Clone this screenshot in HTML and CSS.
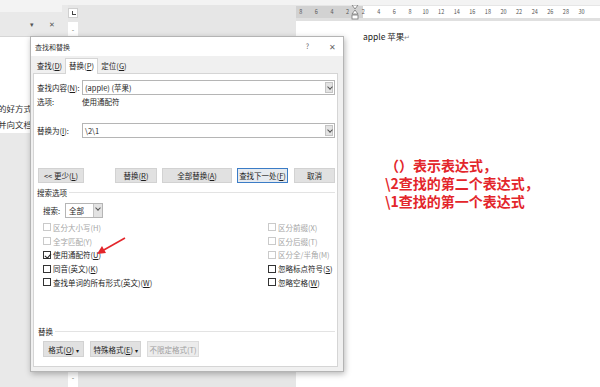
FILE: index.html
```html
<!DOCTYPE html>
<html lang="zh-CN">
<head>
  <meta charset="UTF-8" />
  <meta name="viewport" content="width=device-width, initial-scale=1.0" />
  <title>查找和替换</title>
  <link rel="stylesheet" href="styles.css">
</head>
<body>
  <div class="ribbon-edge"></div>
  <div class="workspace">
    <aside class="nav-pane">
      <div class="nav-top"></div>
      <div class="nav-head">
        <span class="nav-drop">▾</span>
        <span class="nav-close">✕</span>
      </div>
      <div class="nav-results">
        <p class="first">的好方式。</p>
        <p>并向文档中</p>
      </div>
    </aside>
    <div class="splitter"></div>
    <div class="vruler">
      <div class="tab-stop"><i></i></div>
      <div class="vruler-strip">
        <span class="mark top">-</span>
        <span class="mark bottom">-</span>
      </div>
    </div>
    <div class="gutter"></div>
    <main class="page">
      <div class="hruler">
        <div class="ruler-nums">
          <span>8</span><span>6</span><span>4</span><span>2</span>
          <span class="indent">
            <svg width="8" height="16" viewBox="0 0 8 16">
              <polygon points="1,0 7,0 4,4" fill="#fff" stroke="#777" stroke-width="0.8" />
              <polygon points="4,5 7,9 1,9" fill="#fff" stroke="#777" stroke-width="0.8" />
              <rect x="1" y="10" width="6" height="4" fill="#fff" stroke="#777" stroke-width="0.8" />
            </svg>
          </span>
          <span>2</span><span>4</span><span>6</span><span>8</span><span>10</span><span>12</span>
          <span>14</span><span>16</span><span>18</span><span>20</span><span>22</span><span>24</span>
          <span>26</span><span>28</span><span>30</span>
        </div>
      </div>
      <div class="sheet">
        <p>apple 苹果<span class="para">↵</span></p>
      </div>
    </main>
  </div>

  <div class="dialog">
    <div class="dlg-title">
      <span>查找和替换</span>
      <span class="dlg-ctrls"><span class="help">?</span><span class="close">✕</span></span>
    </div>
    <div class="tabs">
      <span class="tab">查找(<u>D</u>)</span>
      <span class="tab active">替换(<u>P</u>)</span>
      <span class="tab">定位(<u>G</u>)</span>
    </div>
    <div class="panel">
      <div class="field-row find">
        <label>查找内容(<u>N</u>):</label>
        <div class="combo"><span>(apple) (苹果)</span><i class="drop"></i></div>
      </div>
      <div class="field-row opts">
        <span class="lbl">选项:</span>
        <span>使用通配符</span>
      </div>
      <div class="field-row repl">
        <label>替换为(<u>I</u>):</label>
        <div class="combo"><span>\2\1</span><i class="drop"></i></div>
      </div>

      <div class="btn-row">
        <button class="btn less">&lt;&lt; 更少(<u>L</u>)</button>
        <button class="btn replace">替换(<u>R</u>)</button>
        <button class="btn all">全部替换(<u>A</u>)</button>
        <button class="btn next focus">查找下一处(<u>F</u>)</button>
        <button class="btn cancel">取消</button>
      </div>

      <div class="group-title"><span>搜索选项</span></div>
      <div class="search-row">
        <span>搜索:</span>
        <div class="select"><span>全部</span><i class="drop"></i></div>
      </div>

      <div class="checks">
        <label class="check off"><i class="box"></i><span>区分大小写(H)</span></label>
        <label class="check off"><i class="box"></i><span>区分前缀(X)</span></label>
        <label class="check off"><i class="box"></i><span>全字匹配(Y)</span></label>
        <label class="check off"><i class="box"></i><span>区分后缀(T)</span></label>
        <label class="check on"><i class="box"></i><span>使用通配符(<u>U</u>)</span></label>
        <label class="check off"><i class="box"></i><span>区分全/半角(M)</span></label>
        <label class="check"><i class="box"></i><span>同音(英文)(<u>K</u>)</span></label>
        <label class="check"><i class="box"></i><span>忽略标点符号(<u>S</u>)</span></label>
        <label class="check"><i class="box"></i><span>查找单词的所有形式(英文)(<u>W</u>)</span></label>
        <label class="check"><i class="box"></i><span>忽略空格(<u>W</u>)</span></label>
      </div>

      <div class="group-title replace-title"><span>替换</span></div>
      <div class="btn-row bottom">
        <button class="btn fmt">格式(<u>O</u>) <b>▾</b></button>
        <button class="btn special">特殊格式(<u>E</u>) <b>▾</b></button>
        <button class="btn nofmt" disabled>不限定格式(T)</button>
      </div>
    </div>
  </div>

  <svg class="arrow" width="40" height="30" viewBox="0 0 40 30">
    <line x1="35" y1="6" x2="12" y2="19" stroke="#e3262b" stroke-width="1.6" />
    <polygon points="7,22 12,14 16,21" fill="#e3262b" />
  </svg>

  <div class="note">
    <p class="first">（）表示表达式，</p>
    <p>\2查找的第二个表达式，</p>
    <p>\1查找的第一个表达式</p>
  </div>
</body>
</html>
```

FILE: styles.css
```css
* {
  box-sizing: border-box;
}
body {
  margin: 0;
  width: 600px;
  height: 387px;
  overflow: hidden;
  position: relative;
  display: flex;
  flex-direction: column;
  background: #e6e6e6;
  font-family: "Noto Sans CJK SC", "Noto Sans", sans-serif;
  color: #222;
}
p {
  margin: 0;
}
.ribbon-edge {
  height: 5px;
  flex: none;
  background: #f3f3f3;
}
.workspace {
  flex: 1;
  display: flex;
}

/* navigation pane */
.nav-pane {
  width: 62px;
  display: flex;
  flex-direction: column;
  background: #e9e9e9;
}
.nav-top {
  height: 7px;
  background: #f3f3f3;
}
.nav-head {
  height: 25px;
  display: flex;
  align-items: center;
  justify-content: flex-end;
  gap: 15px;
  padding-right: 7px;
  color: #555;
  font-size: 7px;
  border-bottom: 1px solid #d6d6d6;
}
.nav-results {
  height: 96px;
  background: #fff;
  font-size: 8.5px;
  color: #333;
  padding-top: 66px;
  overflow: hidden;
  white-space: nowrap;
}
.nav-results p {
  height: 16px;
  line-height: 11px;
  margin-left: -2px;
}
.splitter {
  width: 6px;
  background: #e9e9e9;
}

/* vertical ruler */
.vruler {
  width: 10px;
  display: flex;
  flex-direction: column;
  gap: 4px;
  padding-top: 3px;
}
.tab-stop {
  height: 10px;
  background: #fff;
  border: 1px solid #cfcfcf;
  position: relative;
}
.tab-stop i {
  position: absolute;
  left: 3px;
  top: 2px;
  width: 4px;
  height: 4px;
  border-left: 1px solid #444;
  border-bottom: 1px solid #444;
}
.vruler-strip {
  flex: 1;
  background: #fff;
  display: flex;
  flex-direction: column;
  justify-content: space-between;
  align-items: center;
  font-size: 7px;
  color: #666;
  padding: 2px 0 5px;
}
.gutter {
  flex: 1;
  background: #e6e6e6;
}

/* page */
.page {
  width: 304px;
  display: flex;
  flex-direction: column;
}
.hruler {
  margin-top: 1px;
  height: 15px;
  background: linear-gradient(to right, #d2d2d2 67px, #fff 67px);
  border-bottom: 3px solid #e0e0e0;
}
.ruler-nums {
  display: flex;
  margin-left: -3px;
  font-size: 5.5px;
  color: #555;
  line-height: 12px;
}
.ruler-nums span {
  flex: none;
  width: 15.6px;
  text-align: center;
}
.ruler-nums .indent {
  width: 0;
  position: relative;
  z-index: 1;
}
.ruler-nums .indent svg {
  position: absolute;
  left: -4px;
  top: -1px;
}
.sheet {
  flex: 1;
  background: #fff;
  padding: 9px 0 0 67px;
  font-size: 8.5px;
  color: #222;
}
.sheet p {
  line-height: 12px;
}
.para {
  color: #888;
  font-size: 7px;
}

/* dialog */
.dialog {
  position: absolute;
  left: 30px;
  top: 36px;
  width: 314px;
  height: 336px;
  background: #f0f0f0;
  border: 1px solid #b4b4b4;
  box-shadow: 1px 2px 6px rgba(0, 0, 0, 0.28);
  display: flex;
  flex-direction: column;
  font-size: 7.5px;
  color: #1e1e1e;
}
.dialog u {
  text-decoration: underline;
  text-underline-offset: 1px;
}
.dlg-title {
  height: 19px;
  background: #fff;
  display: flex;
  align-items: center;
  justify-content: space-between;
  padding: 0 7px 0 4px;
  font-size: 7px;
  color: #333;
}
.dlg-ctrls {
  display: flex;
  gap: 20px;
  color: #666;
}
.dlg-ctrls .close {
  font-size: 8px;
}
.tabs {
  height: 17px;
  display: flex;
  align-items: flex-end;
  padding-left: 3px;
}
.tab {
  height: 15px;
  line-height: 14px;
  text-align: center;
  border: 1px solid transparent;
  border-bottom: 0;
}
.tab:nth-child(1) {
  width: 31px;
}
.tab:nth-child(3) {
  width: 32px;
}
.tab.active {
  width: 33px;
  height: 16px;
  margin-bottom: -1px;
  background: #fff;
  border-color: #d5d5d5;
  position: relative;
  z-index: 1;
}
.panel {
  margin: 0 5px 0 2px;
  height: 294px;
  background: #fff;
  border: 1px solid #d5d5d5;
  display: flex;
  flex-direction: column;
  padding: 0 2px 0 3px;
}
.field-row {
  display: flex;
  align-items: center;
}
.field-row label,
.field-row .lbl {
  width: 45px;
  flex: none;
}
.field-row.find {
  margin-top: 6px;
}
.field-row.opts {
  height: 12px;
}
.field-row.repl {
  margin-top: 16px;
}
.combo {
  flex: 1;
  height: 15px;
  border: 1px solid #b5b5b5;
  display: flex;
  align-items: center;
  justify-content: space-between;
  padding: 0 1px 0 2px;
}
.drop {
  width: 8px;
  height: 11px;
  background: #e3e3e3;
  border: 1px solid #c4c4c4;
  position: relative;
}
.drop::after {
  content: "";
  position: absolute;
  left: 1.5px;
  top: 2px;
  width: 3px;
  height: 3px;
  border-right: 1px solid #555;
  border-bottom: 1px solid #555;
  transform: rotate(45deg);
}

.btn-row {
  display: flex;
  margin-top: 30px;
  height: 15px;
}
.btn {
  height: 15px;
  padding: 0;
  font: inherit;
  color: #1e1e1e;
  background: #e1e1e1;
  border: 1px solid #d2d2d2;
}
.btn.less {
  width: 46px;
  margin-left: 1px;
}
.btn.replace {
  width: 42px;
  margin-left: 31px;
}
.btn.all {
  width: 70px;
  margin-left: 5px;
}
.btn.next {
  width: 51px;
  margin-left: 5px;
  border-color: #3b7cc6;
  background: #e6eaef;
}
.btn.cancel {
  width: 41px;
  margin-left: 6px;
}

.group-title {
  margin-top: 4px;
  height: 10px;
  display: flex;
  align-items: center;
  gap: 2px;
}
.group-title::after {
  content: "";
  flex: 1;
  border-top: 1px solid #e3e3e3;
}
.search-row {
  margin-top: 5px;
  height: 16px;
  display: flex;
  align-items: center;
  padding-left: 6px;
  gap: 5px;
}
.select {
  width: 38px;
  height: 15px;
  border: 1px solid #b5b5b5;
  display: flex;
  align-items: center;
  justify-content: space-between;
  padding: 0 0 0 3px;
}
.select .drop {
  height: 13px;
  width: 9px;
  border-width: 0 0 0 1px;
}

.checks {
  margin-top: 2.5px;
  display: grid;
  grid-template-columns: 225px 1fr;
  grid-auto-rows: 13.75px;
  padding-left: 6px;
}
.check {
  display: flex;
  align-items: center;
  gap: 2px;
  white-space: nowrap;
}
.box {
  flex: none;
  width: 8px;
  height: 8px;
  border: 1px solid #333;
  background: #fff;
  position: relative;
}
.check.off {
  color: #a5a5a5;
}
.check.off .box {
  border-color: #cacaca;
}
.check.on .box::after {
  content: "";
  position: absolute;
  left: 2px;
  top: 0;
  width: 2.5px;
  height: 5px;
  border-right: 1px solid #222;
  border-bottom: 1px solid #222;
  transform: rotate(40deg);
}

.replace-title {
  margin-top: 37px;
  padding-left: 1px;
}
.btn-row.bottom {
  margin-top: 5px;
  height: 16px;
  padding-left: 6px;
  gap: 6px;
}
.btn-row.bottom .btn {
  height: 16px;
}
.btn.fmt {
  width: 41px;
}
.btn.special {
  width: 51px;
}
.btn.nofmt {
  width: 52px;
  color: #a0a0a0;
  background: #ececec;
  border-color: #dcdcdc;
}
.btn b {
  font-weight: normal;
  font-size: 6px;
}

/* annotations */
.arrow {
  position: absolute;
  left: 90px;
  top: 232px;
}
.note {
  position: absolute;
  left: 385px;
  top: 156px;
  font-size: 14px;
  font-weight: 700;
  line-height: 18px;
  color: #e3262b;
}
```
